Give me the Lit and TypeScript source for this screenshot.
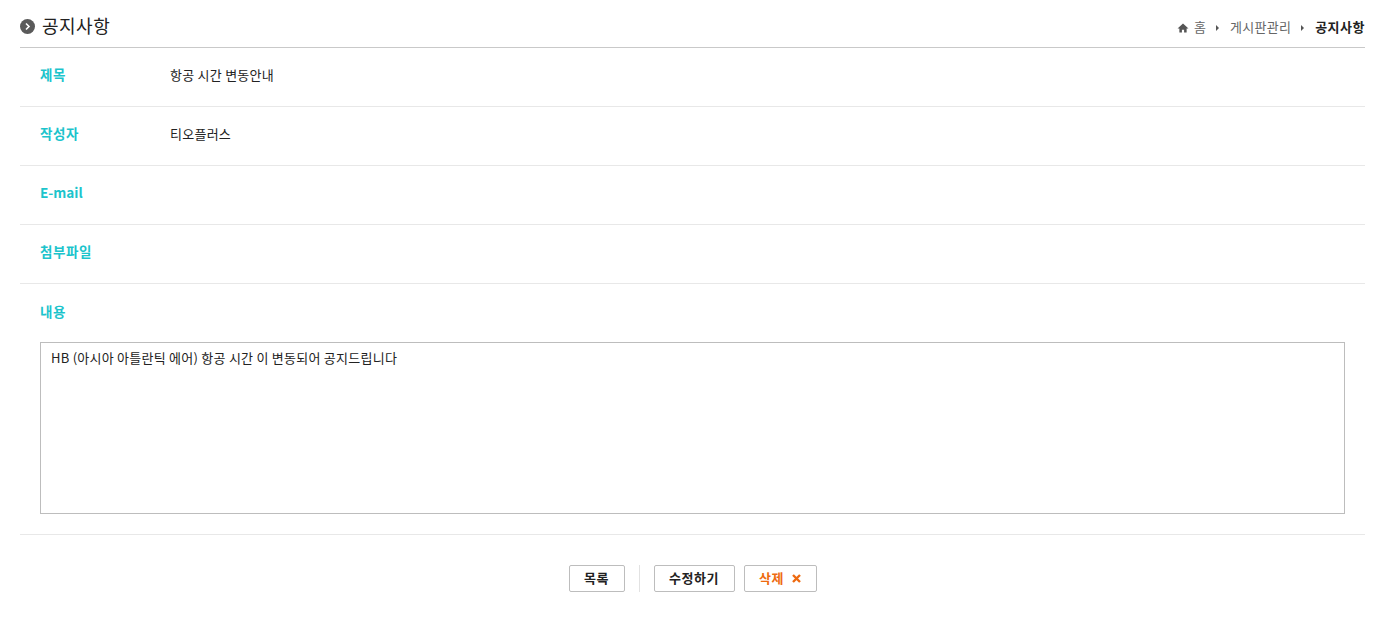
import { LitElement, html, css } from 'lit';
import { customElement } from 'lit/decorators.js';

const rows = [
  { label: '제목', value: '항공 시간 변동안내' },
  { label: '작성자', value: '티오플러스' },
  { label: 'E-mail', value: '', latin: true },
  { label: '첨부파일', value: '' },
];

@customElement('app-root')
export class AppRoot extends LitElement {
  static styles = css`
    :host {
      display: block;
      padding: 0 20px;
      background: #fff;
      color: #222;
      font-family: 'Noto Sans CJK KR', 'Liberation Sans', sans-serif;
      font-size: 13px;
      letter-spacing: 0.25px;
    }

    * {
      box-sizing: border-box;
    }

    .head {
      display: flex;
      justify-content: space-between;
      height: 48px;
      border-bottom: 1px solid #c9c9c9;
    }

    .title {
      display: flex;
      align-items: center;
      gap: 7px;
      height: 24px;
      margin-top: 13px;
      font-size: 18px;
      line-height: 24px;
      letter-spacing: 0.5px;
      color: #222;
    }

    .title svg {
      margin-top: 2px;
    }

    .crumbs {
      display: flex;
      align-items: center;
      height: 16px;
      margin-top: 19px;
      color: #666;
      line-height: 16px;
    }

    .crumbs svg {
      display: block;
    }

    .home {
      margin-right: 5px;
      margin-top: 2px;
    }

    .arrow {
      margin: 1px 11px 0 10px;
    }

    .crumbs b {
      color: #222;
      font-weight: 700;
      letter-spacing: 0.5px;
    }

    .row {
      display: flex;
      align-items: center;
      height: 59px;
      padding: 0 0 6px 20px;
      border-bottom: 1px solid #e8e8e8;
    }

    .label {
      width: 130px;
      color: #1cc4cc;
      font-weight: 700;
      font-size: 13.5px;
      letter-spacing: 0.6px;
    }

    .label.latin {
      letter-spacing: 0;
    }

    .value {
      color: #222;
    }

    .content {
      padding: 0 20px 20px;
      border-bottom: 1px solid #e8e8e8;
    }

    .content .label {
      display: flex;
      align-items: center;
      height: 58px;
      padding-bottom: 4px;
    }

    .box {
      height: 172px;
      padding: 7px 10px;
      border: 1px solid #bdbdbd;
      line-height: 16px;
      color: #222;
    }

    .actions {
      display: flex;
      justify-content: center;
      align-items: center;
      margin-top: 30px;
    }

    .btn {
      display: flex;
      align-items: center;
      justify-content: center;
      height: 27px;
      padding: 0 0 2px;
      border: 1px solid #bdbdbd;
      border-radius: 2px;
      background: #fff;
      color: #222;
      font: inherit;
      font-weight: 700;
      letter-spacing: 0.5px;
    }

    .list {
      width: 56px;
    }

    .edit {
      width: 81px;
    }

    .del {
      width: 73px;
      margin-left: 9px;
      gap: 8px;
      color: #ee6a10;
    }

    .del svg {
      margin-top: 2px;
    }

    .sep {
      width: 1px;
      height: 27px;
      margin: 0 14px;
      background: #e2e2e2;
    }
  `;

  render() {
    return html`
      <div class="head">
        <div class="title">
          <svg width="15" height="15" viewBox="0 0 15 15">
            <circle cx="7.5" cy="7.5" r="7.5" fill="#5a5a5a" />
            <path d="M6 4.5 L9 7.5 L6 10.5" fill="none" stroke="#fff" stroke-width="1.6" />
          </svg>
          <span>공지사항</span>
        </div>
        <div class="crumbs">
          <svg class="home" width="12" height="10" viewBox="0 0 13 11">
            <path d="M6.5 0.5 L0.5 6 H2.5 V10.5 H5.3 V7.5 H7.7 V10.5 H10.5 V6 H12.5 Z" fill="#555" />
          </svg>
          <span>홈</span>
          <svg class="arrow" width="3" height="6" viewBox="0 0 3 6"><path d="M0 0 L3 3 L0 6 Z" fill="#555" /></svg>
          <span>게시판관리</span>
          <svg class="arrow" width="3" height="6" viewBox="0 0 3 6"><path d="M0 0 L3 3 L0 6 Z" fill="#555" /></svg>
          <b>공지사항</b>
        </div>
      </div>
      ${rows.map(
        row => html`<div class="row">
          <span class="label ${row.latin ? 'latin' : ''}">${row.label}</span>
          <span class="value">${row.value}</span>
        </div>`
      )}
      <div class="content">
        <div class="label">내용</div>
        <div class="box">HB (아시아 아틀란틱 에어) 항공 시간 이 변동되어 공지드립니다</div>
      </div>
      <div class="actions">
        <button class="btn list">목록</button>
        <span class="sep"></span>
        <button class="btn edit">수정하기</button>
        <button class="btn del">
          <span>삭제</span>
          <svg width="9" height="9" viewBox="0 0 9 9">
            <path d="M1 1 L8 8 M8 1 L1 8" stroke="#ee6a10" stroke-width="2.4" fill="none" />
          </svg>
        </button>
      </div>
    `;
  }
}
